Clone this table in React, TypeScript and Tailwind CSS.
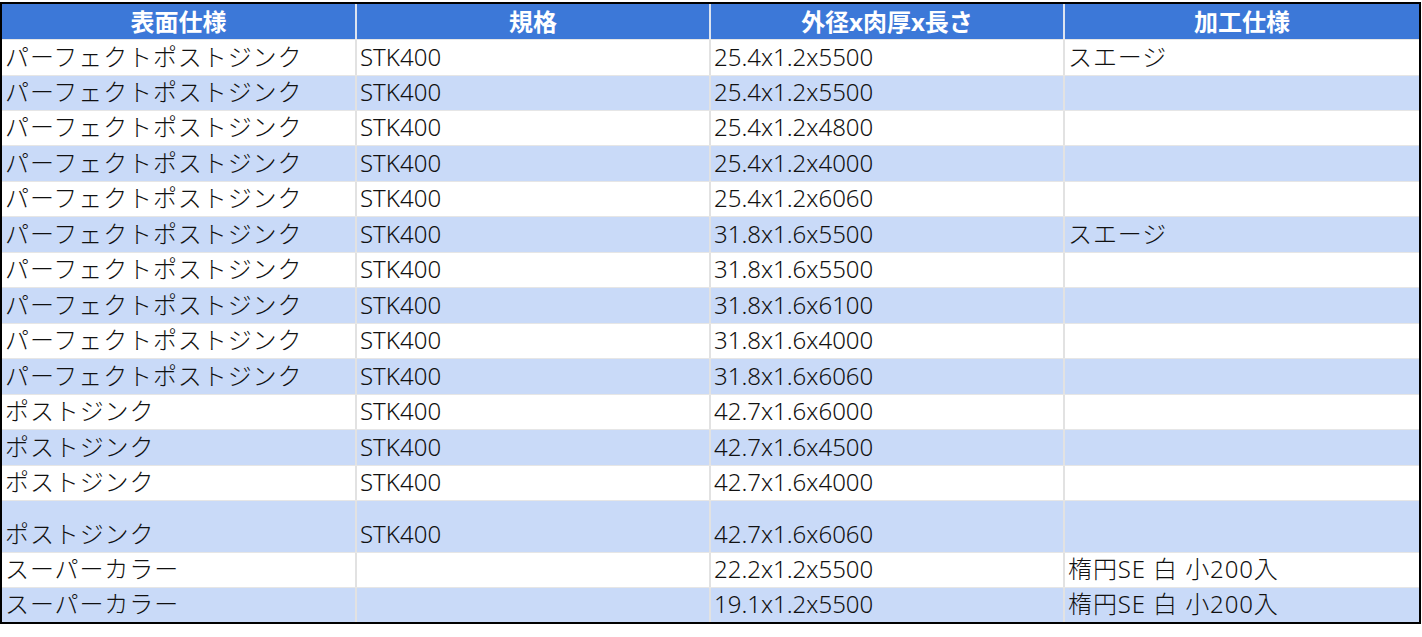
import React from "react";

type Row = { a: string; b: string; c: string; d: string; h: string; bg: string };

const W = "bg-white";
const B = "bg-[#c9daf8]";

const rows: Row[] = [
  { a: "パーフェクトポストジンク", b: "STK400", c: "25.4x1.2x5500", d: "スエージ", h: "h-[36px]", bg: W },
  { a: "パーフェクトポストジンク", b: "STK400", c: "25.4x1.2x5500", d: "", h: "h-[35px]", bg: B },
  { a: "パーフェクトポストジンク", b: "STK400", c: "25.4x1.2x4800", d: "", h: "h-[35px]", bg: W },
  { a: "パーフェクトポストジンク", b: "STK400", c: "25.4x1.2x4000", d: "", h: "h-[36px]", bg: B },
  { a: "パーフェクトポストジンク", b: "STK400", c: "25.4x1.2x6060", d: "", h: "h-[35px]", bg: W },
  { a: "パーフェクトポストジンク", b: "STK400", c: "31.8x1.6x5500", d: "スエージ", h: "h-[36px]", bg: B },
  { a: "パーフェクトポストジンク", b: "STK400", c: "31.8x1.6x5500", d: "", h: "h-[35px]", bg: W },
  { a: "パーフェクトポストジンク", b: "STK400", c: "31.8x1.6x6100", d: "", h: "h-[36px]", bg: B },
  { a: "パーフェクトポストジンク", b: "STK400", c: "31.8x1.6x4000", d: "", h: "h-[35px]", bg: W },
  { a: "パーフェクトポストジンク", b: "STK400", c: "31.8x1.6x6060", d: "", h: "h-[36px]", bg: B },
  { a: "ポストジンク", b: "STK400", c: "42.7x1.6x6000", d: "", h: "h-[35px]", bg: W },
  { a: "ポストジンク", b: "STK400", c: "42.7x1.6x4500", d: "", h: "h-[36px]", bg: B },
  { a: "ポストジンク", b: "STK400", c: "42.7x1.6x4000", d: "", h: "h-[35px]", bg: W },
  { a: "ポストジンク", b: "STK400", c: "42.7x1.6x6060", d: "", h: "h-[52px]", bg: B },
  { a: "スーパーカラー", b: "", c: "22.2x1.2x5500", d: "楕円SE 白 小200入", h: "h-[35px]", bg: W },
  { a: "スーパーカラー", b: "", c: "19.1x1.2x5500", d: "楕円SE 白 小200入", h: "h-[35px]", bg: B },
];

const cols = "grid grid-cols-[353px_354px_354px_356px]";
const sep = "border-l-2 border-[#e2e2e2]";

function Cell({ text, first, wide }: { text: string; first?: boolean; wide?: boolean }) {
  return (
    <div
      className={`flex items-end pl-[3px] pb-[6px] leading-[24px] whitespace-nowrap font-light ${
        wide ? "tracking-[0.9px]" : ""
      } ${first ? "" : sep}`}
    >
      {text}
    </div>
  );
}

export default function App() {
  return (
    <div className="bg-white w-[1422px] h-[637px] pt-[2px]">
      <div
        className="w-[1421px] border-2 border-black text-[24px] text-[#111]"
        style={{ fontFamily: '"Noto Sans", "Noto Sans CJK JP", sans-serif' }}
      >
        <div className={`${cols} h-[35px] bg-[#3c78d8] text-white font-bold`}>
          {["表面仕様", "規格", "外径x肉厚x長さ", "加工仕様"].map((t, i) => (
            <div
              key={t}
              className={`flex items-center justify-center leading-[24px] pt-[1px] ${
                i === 0 ? "" : "border-l-2 border-[#dde4f0]"
              }`}
            >
              {t}
            </div>
          ))}
        </div>
        {rows.map((r, i) => (
          <div
            key={i}
            className={`${cols} ${r.h} ${r.bg} border-t border-[#e6e6e6] first:border-t-0`}
          >
            <Cell text={r.a} first wide />
            <Cell text={r.b} />
            <Cell text={r.c} />
            <Cell text={r.d} wide />
          </div>
        ))}
      </div>
    </div>
  );
}
